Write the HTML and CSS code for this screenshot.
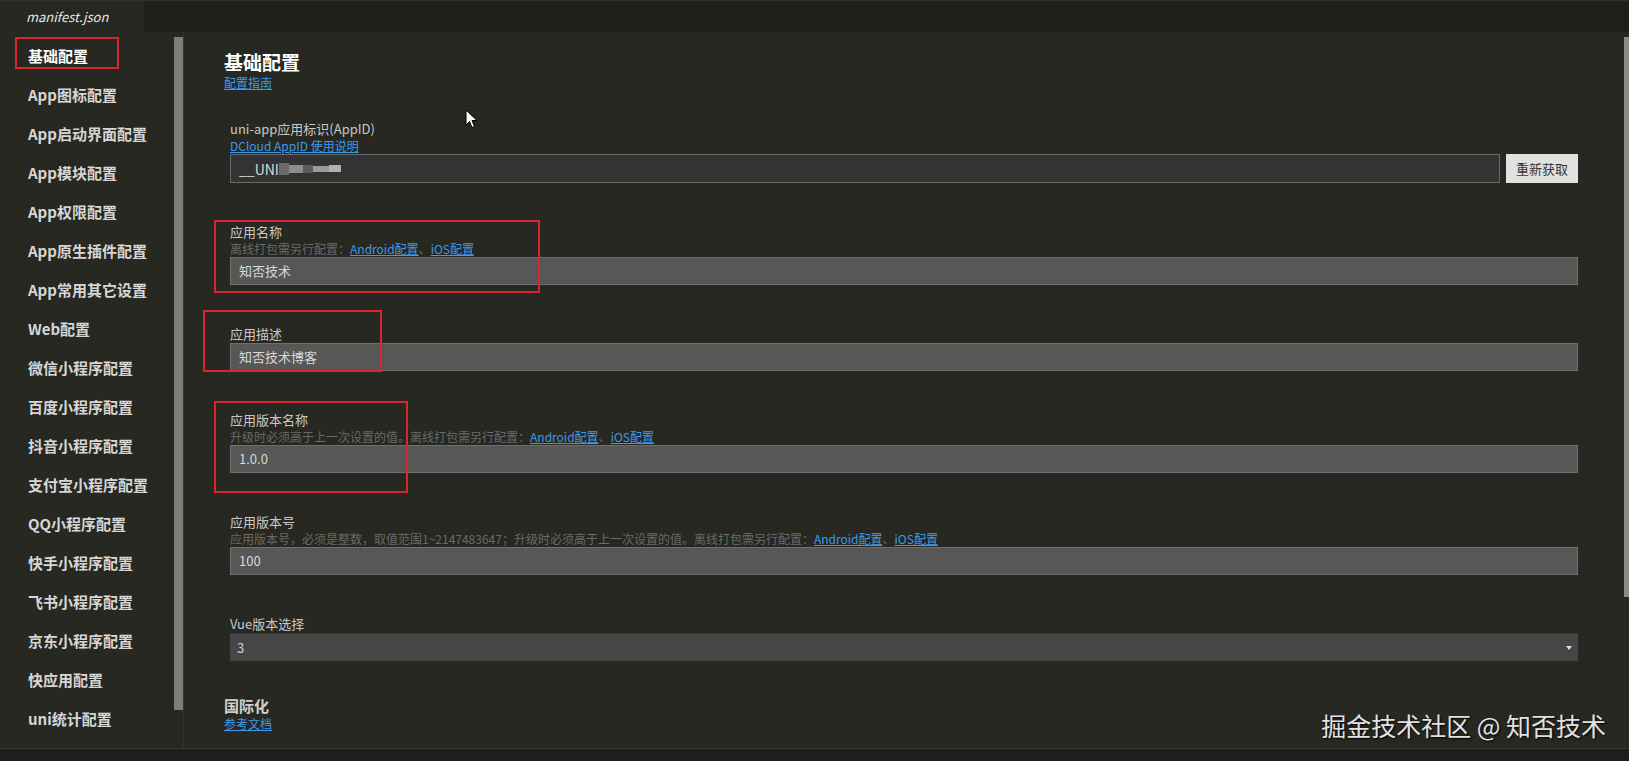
FILE: index.html
```html
<!DOCTYPE html>
<html lang="zh-CN">
<head>
    <meta charset="UTF-8">
    <meta name="viewport" content="width=device-width, initial-scale=1.0">
    <title>manifest.json</title>
    <link rel="stylesheet" href="styles.css">
</head>
<body>
    <div class="tabbar">
        <div class="tab">manifest.json</div>
    </div>

    <div class="workspace">
        <div class="sidebar">
            <ul class="nav">
                <li class="nav-item active">基础配置<span class="mark mark-nav"></span></li>
                <li class="nav-item">App图标配置</li>
                <li class="nav-item">App启动界面配置</li>
                <li class="nav-item">App模块配置</li>
                <li class="nav-item">App权限配置</li>
                <li class="nav-item">App原生插件配置</li>
                <li class="nav-item">App常用其它设置</li>
                <li class="nav-item">Web配置</li>
                <li class="nav-item">微信小程序配置</li>
                <li class="nav-item">百度小程序配置</li>
                <li class="nav-item">抖音小程序配置</li>
                <li class="nav-item">支付宝小程序配置</li>
                <li class="nav-item">QQ小程序配置</li>
                <li class="nav-item">快手小程序配置</li>
                <li class="nav-item">飞书小程序配置</li>
                <li class="nav-item">京东小程序配置</li>
                <li class="nav-item">快应用配置</li>
                <li class="nav-item">uni统计配置</li>
            </ul>
            <div class="nav-track"><div class="nav-thumb"></div></div>
        </div>

        <div class="main">
            <div class="form">
                <h2 class="section-title">基础配置</h2>
                <a class="link" href="#">配置指南</a>

                <div class="group group-first">
                    <div class="label">uni-app应用标识(AppID)</div>
                    <a class="link" href="#">DCloud AppID 使用说明</a>
                    <div class="appid-row">
                        <div class="input input-dark">__UNI<span class="blur b1"></span><span class="blur b2"></span><span class="blur b3"></span><span class="blur b4"></span><span class="blur b5"></span></div>
                        <button class="btn">重新获取</button>
                    </div>
                </div>

                <div class="group">
                    <span class="mark mark-name"></span>
                    <div class="label">应用名称</div>
                    <div class="desc">离线打包需另行配置：<a class="link" href="#">Android配置</a>、<a class="link" href="#">iOS配置</a></div>
                    <div class="input">知否技术</div>
                </div>

                <div class="group">
                    <span class="mark mark-desc"></span>
                    <div class="label">应用描述</div>
                    <div class="input">知否技术博客</div>
                </div>

                <div class="group">
                    <span class="mark mark-version"></span>
                    <div class="label">应用版本名称</div>
                    <div class="desc">升级时必须高于上一次设置的值。离线打包需另行配置：<a class="link" href="#">Android配置</a>、<a class="link" href="#">iOS配置</a></div>
                    <div class="input">1.0.0</div>
                </div>

                <div class="group">
                    <div class="label">应用版本号</div>
                    <div class="desc">应用版本号，必须是整数，取值范围1~2147483647；升级时必须高于上一次设置的值。离线打包需另行配置：<a class="link" href="#">Android配置</a>、<a class="link" href="#">iOS配置</a></div>
                    <div class="input">100</div>
                </div>

                <div class="group">
                    <div class="label">Vue版本选择</div>
                    <div class="select">3<span class="caret"></span></div>
                </div>

                <h3 class="sub-title">国际化</h3>
                <a class="link" href="#">参考文档</a>
            </div>
            <div class="main-track"><div class="main-thumb"></div></div>
        </div>

        <svg class="cursor" width="13" height="20" viewBox="0 0 13 20">
            <path d="M1 1 L1 16 L4.5 12.5 L7 18.5 L9.5 17.5 L7 11.5 L12 11.5 Z" fill="#fff" stroke="#000" stroke-width="1"/>
        </svg>
        <div class="watermark">掘金技术社区 @ 知否技术</div>
    </div>

    <div class="statusbar"></div>
</body>
</html>
```

FILE: styles.css
```css
html, body {
    margin: 0;
    padding: 0;
}
body {
    width: 1629px;
    height: 761px;
    overflow: hidden;
    background-color: #272822;
    color: #c8c8c8;
    font-family: "Noto Sans CJK SC", "Noto Sans", sans-serif;
    display: flex;
    flex-direction: column;
}
a {
    color: #3d9be9;
    text-decoration: underline;
}

/* tab bar */
.tabbar {
    height: 31px;
    border-top: 1px solid #2f302b;
    background-color: #1e1f1b;
    display: flex;
}
.tab {
    width: 118px;
    padding-left: 26px;
    background-color: #272822;
    color: #e6e6e6;
    font-style: italic;
    font-size: 13px;
    line-height: 31px;
}

/* middle area */
.workspace {
    position: relative;
    flex: 1;
    display: flex;
    min-height: 0;
}

.sidebar {
    width: 183px;
    display: flex;
    border-right: 1px solid #34352f;
}
.nav {
    list-style: none;
    margin: 0;
    padding: 4px 0 0 0;
    width: 174px;
}
.nav-item {
    position: relative;
    height: 39px;
    line-height: 39px;
    padding-left: 28px;
    font-size: 15px;
    font-weight: bold;
    color: #d6d6d6;
    white-space: nowrap;
}
.nav-item.active {
    color: #ffffff;
}
.nav-track {
    width: 9px;
    padding-top: 5px;
}
.nav-thumb {
    height: 673px;
    background-color: #7c7c7c;
}

.main {
    flex: 1;
    display: flex;
}
.form {
    flex: 1;
    padding: 18px 46px 0 40px;
    display: flex;
    flex-direction: column;
    align-items: flex-start;
}
.main-track {
    width: 5px;
    padding-top: 5px;
}
.main-thumb {
    height: 560px;
    background-color: #8a8a8a;
}

.section-title {
    margin: 0;
    font-size: 19px;
    line-height: 24px;
    color: #ffffff;
}
.form > .link {
    font-size: 12px;
    line-height: 17px;
}
.sub-title {
    margin: 36px 0 0 0;
    font-size: 15px;
    line-height: 18px;
    color: #d0d0d0;
}

.group {
    position: relative;
    align-self: stretch;
    margin: 40px 0 0 6px;
    display: flex;
    flex-direction: column;
    align-items: flex-start;
}
.group-first {
    margin-top: 29px;
}
.label {
    font-size: 13px;
    line-height: 18px;
    color: #c8c8c8;
}
.group .link {
    font-size: 12px;
    line-height: 16px;
}
.desc {
    font-size: 12px;
    line-height: 16px;
    color: #6a6a66;
    white-space: nowrap;
}
.input {
    align-self: stretch;
    box-sizing: border-box;
    height: 28px;
    padding-left: 8px;
    background-color: #575757;
    border: 1px solid #6f6f6f;
    color: #d8d8d8;
    font-size: 13px;
    line-height: 26px;
    display: flex;
    align-items: center;
}
.appid-row {
    align-self: stretch;
    display: flex;
    gap: 6px;
}
.input-dark {
    flex: 1;
    height: 29px;
    background-color: #333333;
    border-color: #6a6a6a;
    font-size: 14px;
}
.blur {
    display: inline-block;
    height: 8px;
}
.b1 { width: 10px; background-color: #6a6a6a; height: 12px; }
.b2 { width: 14px; background-color: #8c8c8c; }
.b3 { width: 10px; background-color: #5c5c5c; }
.b4 { width: 16px; background-color: #9a9a9a; height: 6px; }
.b5 { width: 12px; background-color: #b0b0b0; height: 7px; }

.btn {
    width: 72px;
    height: 29px;
    border: none;
    background-color: #e1e1e1;
    color: #333333;
    font-family: "Noto Sans CJK SC", sans-serif;
    font-size: 13px;
    padding: 0;
}
.select {
    position: relative;
    align-self: stretch;
    box-sizing: border-box;
    height: 28px;
    padding-left: 7px;
    background-color: #464646;
    border-top: 1px solid #3a3a3a;
    color: #d0d0d0;
    font-size: 13px;
    line-height: 27px;
}
.caret {
    position: absolute;
    right: 6px;
    top: 12px;
    border-left: 3px solid transparent;
    border-right: 3px solid transparent;
    border-top: 4px solid #e0e0e0;
}

/* red annotation frames */
.mark {
    position: absolute;
    box-sizing: border-box;
    border: 2px solid #d9262c;
}
.mark-nav {
    left: 15px;
    top: 1px;
    width: 104px;
    height: 32px;
}
.mark-name {
    left: -16px;
    top: -3px;
    width: 326px;
    height: 73px;
}
.mark-desc {
    left: -27px;
    top: -15px;
    width: 179px;
    height: 62px;
}
.mark-version {
    left: -16px;
    top: -10px;
    width: 194px;
    height: 92px;
}

.cursor {
    position: absolute;
    left: 465px;
    top: 77px;
}
.watermark {
    position: absolute;
    right: 23px;
    bottom: 8px;
    font-size: 25px;
    line-height: 30px;
    color: #e2e2e2;
    text-shadow: 1px 1px 2px #000000;
}

.statusbar {
    height: 12px;
    background-color: #1e1f1b;
    border-top: 1px solid #3c3d38;
}
```
